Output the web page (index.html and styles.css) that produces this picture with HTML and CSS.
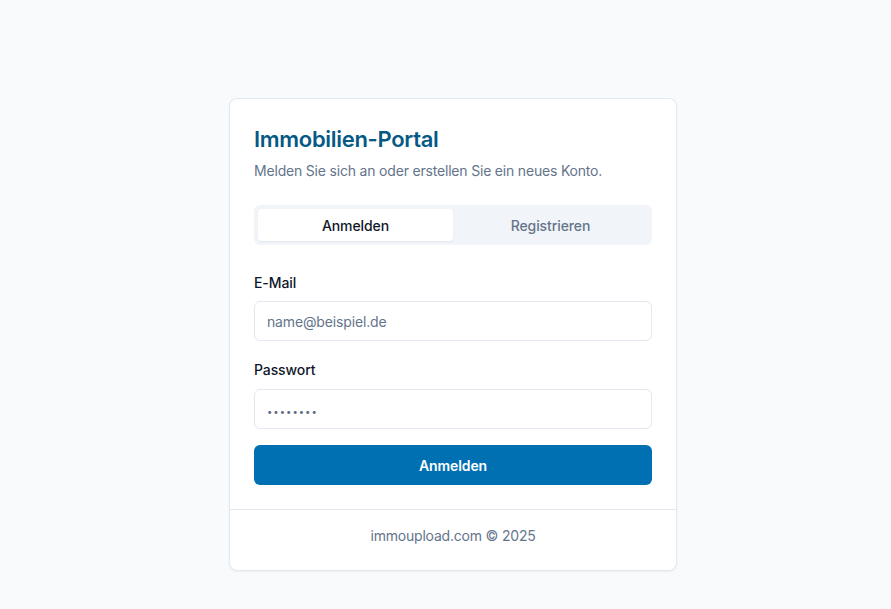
FILE: index.html
```html
<!DOCTYPE html>
<html lang="de">
<head>
<meta charset="utf-8">
<title>Immobilien-Portal</title>
<link rel="stylesheet" href="styles.css">
</head>
<body>
<main class="page">
  <div class="card">
    <div class="card-header">
      <h1 class="title">Immobilien-Portal</h1>
      <p class="desc">Melden Sie sich an oder erstellen Sie ein neues Konto.</p>
    </div>
    <div class="card-content">
      <div class="tabs">
        <button class="tab active" type="button">Anmelden</button>
        <button class="tab" type="button">Registrieren</button>
      </div>
      <form class="form">
        <div class="field">
          <label class="label" for="email">E-Mail</label>
          <input class="input" id="email" type="email" placeholder="name@beispiel.de">
        </div>
        <div class="field field-pw">
          <label class="label" for="pw">Passwort</label>
          <input class="input pw" id="pw" type="text" placeholder="••••••••">
        </div>
        <button class="submit" type="button">Anmelden</button>
      </form>
    </div>
    <div class="card-footer">immoupload.com © 2025</div>
  </div>
</main>
</body>
</html>
```

FILE: styles.css
```css
* { box-sizing: border-box; }
html, body { margin: 0; padding: 0; }
body {
  background: #f8fafc;
  font-family: Inter, "Noto Sans", sans-serif;
  color: #0f172a;
  -webkit-font-smoothing: antialiased;
}
.page {
  display: flex;
  justify-content: center;
  align-items: flex-start;
  padding: 98px 0 0 15px;
  min-height: 609px;
}
.card {
  width: 448px;
  background: #fff;
  border: 1px solid #e2e8f0;
  border-radius: 8px;
  box-shadow: 0 1px 2px rgba(0,0,0,0.05);
  display: flex;
  flex-direction: column;
}
.card-header {
  padding: 24px 24px 24px;
}
.title {
  margin: 0;
  font-size: 22px;
  line-height: 32px;
  font-weight: 600;
  letter-spacing: -0.3px;
  color: #075985;
}
.desc {
  margin: 6px 0 0;
  font-size: 14px;
  line-height: 20px;
  letter-spacing: -0.19px;
  color: #64748b;
}
.card-content {
  padding: 0 24px 24px;
}
.tabs {
  display: grid;
  grid-template-columns: 1fr 1fr;
  height: 40px;
  padding: 4px;
  background: #f1f5f9;
  border-radius: 6px;
}
.tab {
  border: 0;
  background: transparent;
  font-family: inherit;
  font-size: 14px;
  font-weight: 500;
  letter-spacing: -0.1px;
  color: #64748b;
  border-radius: 4px;
  cursor: pointer;
}
.tab.active {
  background: #fff;
  color: #0f172a;
  box-shadow: 0 1px 2px rgba(0,0,0,0.06);
}
.form {
  margin-top: 28px;
  display: flex;
  flex-direction: column;
}
.field {
  display: flex;
  flex-direction: column;
  gap: 8px;
  margin-bottom: 19px;
}
.field-pw {
  gap: 9px;
  margin-bottom: 16px;
}
.label {
  font-size: 14px;
  line-height: 20px;
  font-weight: 500;
  letter-spacing: -0.1px;
  color: #0f172a;
}
.input {
  height: 40px;
  width: 100%;
  border: 1px solid #e2e8f0;
  border-radius: 6px;
  padding: 0 12px;
  font-family: inherit;
  font-size: 14px;
  letter-spacing: -0.15px;
  color: #0f172a;
  background: #fff;
  outline: none;
}
.input::placeholder { color: #64748b; }
.input.pw::placeholder {
  color: #5b6b80;
  font-size: 9.5px;
  letter-spacing: 1px;
}
.submit {
  height: 40px;
  width: 100%;
  border: 0;
  border-radius: 6px;
  background: #0070b3;
  color: #fff;
  font-family: inherit;
  font-size: 14px;
  font-weight: 600;
  letter-spacing: -0.1px;
  cursor: pointer;
}
.card-footer {
  border-top: 1px solid #e2e8f0;
  padding: 16px 24px 24px;
  text-align: center;
  font-size: 14px;
  line-height: 20px;
  letter-spacing: -0.2px;
  color: #64748b;
}
```
